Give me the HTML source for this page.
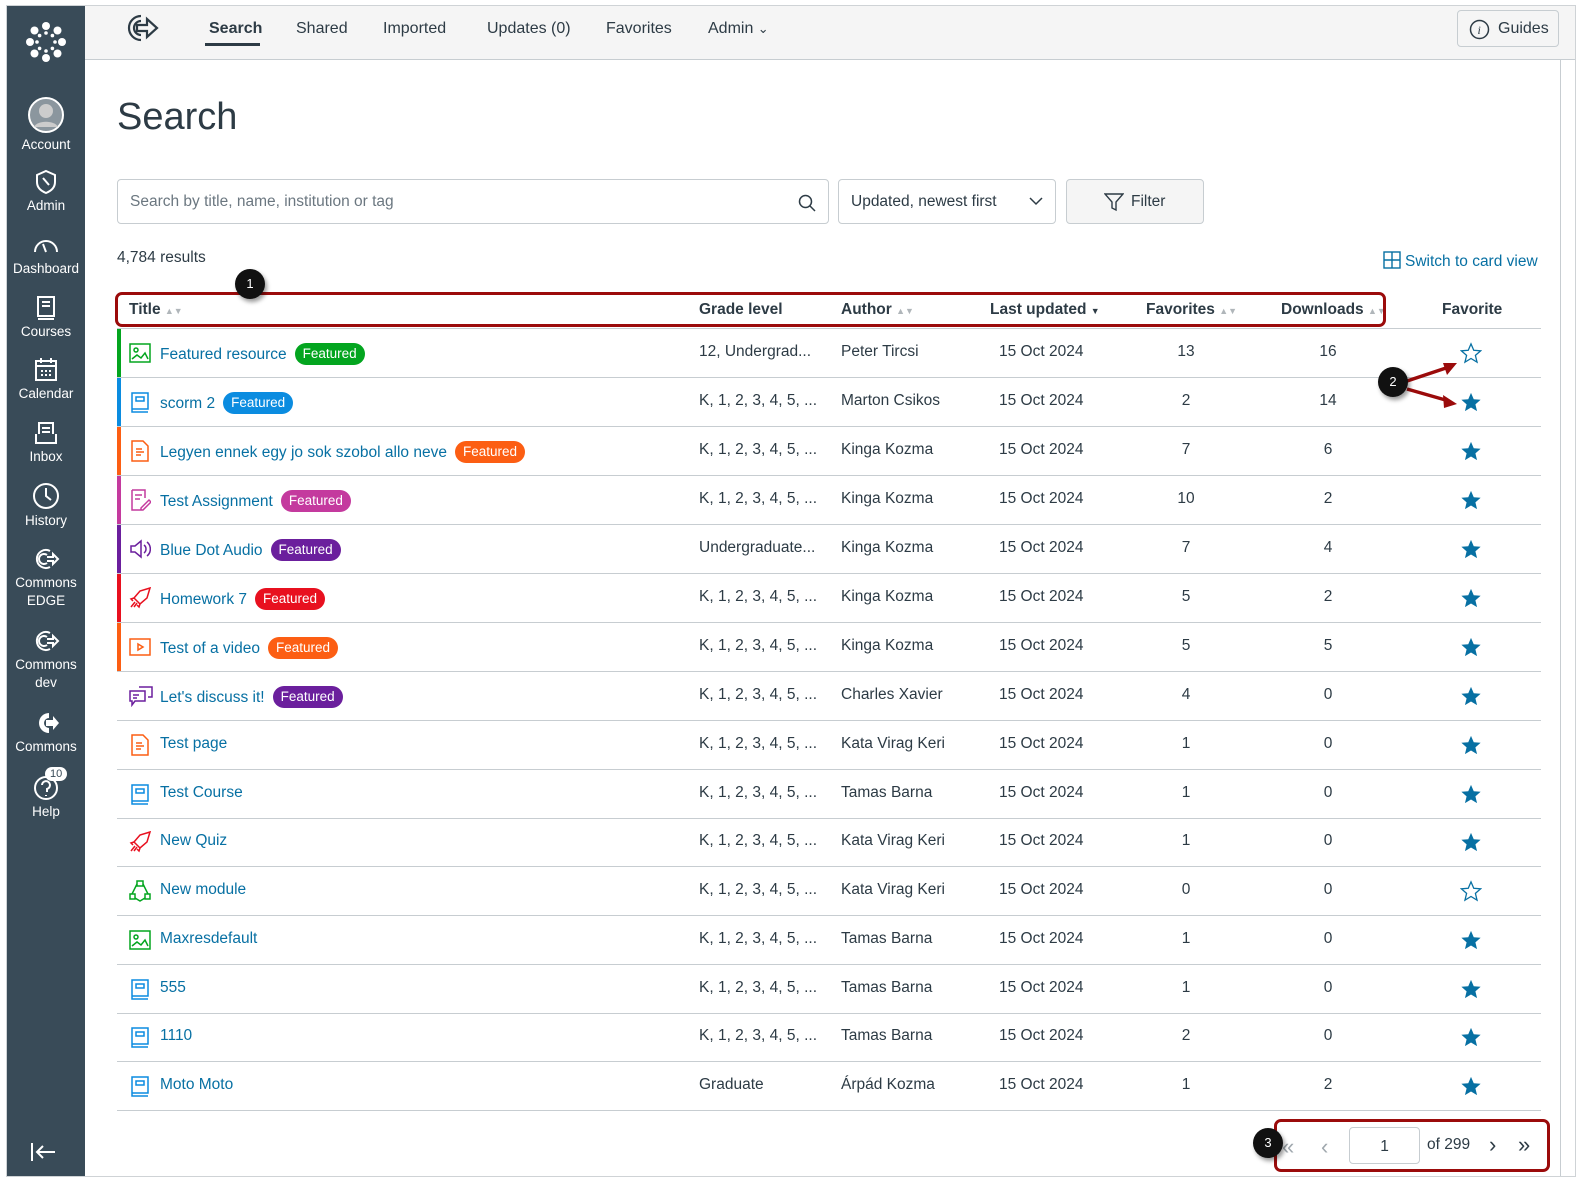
<!DOCTYPE html>
<html><head><meta charset="utf-8">
<style>
*{box-sizing:border-box;margin:0;padding:0}
body{width:1586px;height:1197px;background:#fff;font-family:"Liberation Sans",sans-serif;color:#2d3b45;position:relative;overflow:hidden}
.frame{position:absolute;left:6px;top:5px;width:1570px;height:1172px;border:1px solid #cfd3d6;background:#fff;overflow:hidden}
.side{position:absolute;left:0;top:0;width:78px;height:1170px;background:#394b58;color:#fff}
.si{position:absolute;left:0;width:78px;text-align:center;font-size:13.5px;line-height:18px}
.si svg{display:block;margin:0 auto 2px}
.top{position:absolute;left:78px;top:0;right:0;height:54px;background:#f5f5f5;border-bottom:1px solid #c7cdd1}
.nav{position:absolute;top:14px;font-size:16px;color:#2d3b45}
.a{position:absolute;white-space:nowrap}
.row{position:absolute;left:110px;width:1424px;height:49px;border-bottom:1px solid #c7cdd1;font-size:15.5px}
.row .bar{position:absolute;left:0;top:0;width:4px;height:48px}
.row .t{position:absolute;left:43px;top:14px;color:#0770a3;white-space:nowrap}
.row .ic{position:absolute;left:12px;top:13px}
.b{display:inline-block;color:#fff;font-size:13.5px;border-radius:12px;padding:2px 8px;margin-left:8px;vertical-align:1px;line-height:18px}
.row .g{position:absolute;left:582px;top:14px}
.row .au{position:absolute;left:724px;top:14px}
.row .d{position:absolute;left:882px;top:14px}
.row .f{position:absolute;left:1049px;width:40px;text-align:center;top:14px}
.row .dl{position:absolute;left:1191px;width:40px;text-align:center;top:14px}
.row .s{position:absolute;left:1343px;top:13px}
.h{position:absolute;top:295px;font-weight:bold;font-size:15.5px}
.ar{color:#b0b6ba;font-size:9px}
.circ{position:absolute;width:30px;height:30px;border-radius:50%;background:#111;color:#fff;font-size:13px;text-align:center;line-height:30px;box-shadow:2px 3px 4px rgba(0,0,0,.4)}
</style></head><body>
<div class="frame">
<div class="side">
 <div class="si" style="top:14px"><svg width="44" height="44" viewBox="0 0 44 44" fill="#fff"><circle cx="22" cy="6" r="4"/><circle cx="22" cy="38" r="4"/><circle cx="6" cy="22" r="4"/><circle cx="38" cy="22" r="4"/><circle cx="10.5" cy="10.5" r="4"/><circle cx="33.5" cy="10.5" r="4"/><circle cx="10.5" cy="33.5" r="4"/><circle cx="33.5" cy="33.5" r="4"/><circle cx="22" cy="13" r="1.8"/><circle cx="22" cy="31" r="1.8"/><circle cx="13" cy="22" r="1.8"/><circle cx="31" cy="22" r="1.8"/><circle cx="15.6" cy="15.6" r="1.8"/><circle cx="28.4" cy="15.6" r="1.8"/><circle cx="15.6" cy="28.4" r="1.8"/><circle cx="28.4" cy="28.4" r="1.8"/></svg></div>
 <div class="si" style="top:90px"><svg width="38" height="38" viewBox="0 0 38 38"><circle cx="19" cy="19" r="17" fill="#8b969e" stroke="#fff" stroke-width="2"/><circle cx="19" cy="15" r="7" fill="#ccc"/><path d="M7 31c3-7 21-7 24 0" fill="#ccc"/></svg>Account</div>
 <div class="si" style="top:163px"><svg width="26" height="26" viewBox="0 0 26 26" fill="none" stroke="#fff" stroke-width="2"><path d="M13 2l9 4v7c0 6-4 9-9 11-5-2-9-5-9-11V6z"/><path d="M10 9l6 7"/></svg>Admin</div>
 <div class="si" style="top:226px"><svg width="28" height="26" viewBox="0 0 28 26" fill="none" stroke="#fff" stroke-width="2"><path d="M3 20a11 11 0 1 1 22 0"/><path d="M14 20l-3-8"/></svg>Dashboard</div>
 <div class="si" style="top:289px"><svg width="24" height="26" viewBox="0 0 24 26" fill="none" stroke="#fff" stroke-width="2"><rect x="4" y="2" width="16" height="19"/><path d="M4 24h16M8 7h8M8 11h8"/></svg>Courses</div>
 <div class="si" style="top:351px"><svg width="26" height="26" viewBox="0 0 26 26" fill="none" stroke="#fff" stroke-width="2"><rect x="3" y="4" width="20" height="19"/><path d="M3 9h20M8 1v5M18 1v5M8 14h2M12 14h2M16 14h2M8 18h2M12 18h2M16 18h2"/></svg>Calendar</div>
 <div class="si" style="top:414px"><svg width="26" height="26" viewBox="0 0 26 26" fill="none" stroke="#fff" stroke-width="2"><path d="M3 14v9h20v-9M6 14V3h14v11M9 8h8M9 12h8"/></svg>Inbox</div>
 <div class="si" style="top:476px"><svg width="28" height="28" viewBox="0 0 28 28" fill="none" stroke="#fff" stroke-width="2"><circle cx="14" cy="14" r="12"/><path d="M14 6v8l5 4"/></svg>History</div>
 <div class="si" style="top:540px"><svg width="28" height="26" viewBox="0 0 28 26" fill="none" stroke="#fff" stroke-width="2"><path d="M18 5a9 9 0 1 0 0 16M15 9a5 5 0 1 0 0 8M15 11h6v-3l5 5-5 5v-3h-6"/></svg>Commons<br>EDGE</div>
 <div class="si" style="top:622px"><svg width="28" height="26" viewBox="0 0 28 26" fill="none" stroke="#fff" stroke-width="2"><path d="M18 5a9 9 0 1 0 0 16M15 9a5 5 0 1 0 0 8M15 11h6v-3l5 5-5 5v-3h-6"/></svg>Commons<br>dev</div>
 <div class="si" style="top:704px"><svg width="28" height="26" viewBox="0 0 28 26" fill="#fff"><path d="M17 3a10 10 0 1 0 0 20v-5a5 5 0 1 1 0-10zM14 10h7V6l6 7-6 7v-4h-7z"/></svg>Commons</div>
 <div class="si" style="top:767px"><svg width="28" height="28" viewBox="0 0 28 28" fill="none" stroke="#fff" stroke-width="2"><circle cx="14" cy="15" r="11"/><path d="M10 12a4 4 0 1 1 5 4v3M14 22v1"/></svg>Help</div>
 <div style="position:absolute;left:38px;top:761px;background:#fff;color:#394b58;font-size:11px;border-radius:10px;padding:1px 5px">10</div>
 <div style="position:absolute;left:22px;top:1135px"><svg width="28" height="22" viewBox="0 0 28 22" fill="none" stroke="#fff" stroke-width="2"><path d="M3 2v18M26 11H8M14 5l-6 6 6 6"/></svg></div>
</div>
<div class="top">
 <svg style="position:absolute;left:34px;top:6px" width="42" height="32" viewBox="0 0 42 32" fill="none" stroke="#2d3b45" stroke-width="2.2"><path d="M22 4A12 12 0 1 0 22 28M22 9a7 7 0 1 0 0 14M18 13h10V7l10 9-10 9v-6H18z"/></svg>
 <div class="nav" style="left:124px;font-weight:bold">Search</div>
 <div style="position:absolute;left:120px;top:37px;width:55px;height:3px;background:#2d3b45"></div>
 <div class="nav" style="left:211px">Shared</div>
 <div class="nav" style="left:298px">Imported</div>
 <div class="nav" style="left:402px">Updates (0)</div>
 <div class="nav" style="left:521px">Favorites</div>
 <div class="nav" style="left:623px">Admin <span style="font-size:13px">&#8964;</span></div>
 <div style="position:absolute;right:16px;top:4px;width:102px;height:37px;border:1px solid #c7cdd1;border-radius:4px;background:#f5f5f5;font-size:16px;padding:9px 0 0 40px">Guides<svg style="position:absolute;left:11px;top:8px" width="21" height="21" viewBox="0 0 21 21"><circle cx="10.5" cy="10.5" r="9" fill="none" stroke="#2d3b45" stroke-width="1.5"/><text x="8.5" y="15" font-size="12" font-style="italic" font-family="Liberation Serif" fill="#2d3b45">i</text></svg></div>
</div>
<div class="a" style="left:110px;top:90px;font-size:38px;color:#2d3b45">Search</div>
<div class="a" style="left:110px;top:173px;width:712px;height:45px;border:1px solid #c7cdd1;border-radius:4px;font-size:15.5px;color:#6b7780;padding:13px 12px">Search by title, name, institution or tag
<svg style="position:absolute;right:12px;top:14px" width="18" height="18" viewBox="0 0 18 18" fill="none" stroke="#2d3b45" stroke-width="1.5"><circle cx="7.5" cy="7.5" r="6"/><path d="M12 12l5 5"/></svg></div>
<div class="a" style="left:831px;top:173px;width:218px;height:45px;border:1px solid #c7cdd1;border-radius:4px;font-size:15.5px;padding:13px 12px">Updated, newest first<svg style="position:absolute;right:12px;top:16px" width="14" height="10" viewBox="0 0 14 10" fill="none" stroke="#2d3b45" stroke-width="1.5"><path d="M1 2l6 6 6-6"/></svg></div>
<div class="a" style="left:1059px;top:173px;width:138px;height:45px;border:1px solid #c7cdd1;border-radius:4px;background:#f5f5f5;font-size:15.5px;padding:13px 0 0 64px">Filter<svg style="position:absolute;left:37px;top:12px" width="20" height="20" viewBox="0 0 20 20" fill="none" stroke="#2d3b45" stroke-width="1.4"><path d="M1 2h18l-7 8v8l-4-2v-6z"/></svg></div>
<div class="a" style="left:110px;top:243px;font-size:15.5px">4,784 results</div>
<div class="a" style="left:1376px;top:245px;font-size:15.5px;color:#0770a3"><svg style="vertical-align:-3px;margin-right:4px" width="18" height="18" viewBox="0 0 18 18" fill="none" stroke="#0770a3" stroke-width="1.4"><rect x="1" y="1" width="16" height="16"/><path d="M9 1v16M1 9h16"/></svg>Switch to card view</div>

<div class="h" style="left:122px">Title <span class="ar">&#9650;&#9660;</span></div>
<div class="h" style="left:692px">Grade level</div>
<div class="h" style="left:834px">Author <span class="ar">&#9650;&#9660;</span></div>
<div class="h" style="left:983px">Last updated <span style="font-size:9px">&#9660;</span></div>
<div class="h" style="left:1139px">Favorites <span class="ar">&#9650;&#9660;</span></div>
<div class="h" style="left:1274px">Downloads <span class="ar">&#9650;&#9660;</span></div>
<div class="h" style="left:1435px">Favorite</div>
<div class="a" style="left:110px;top:322px;width:1424px;height:1px;background:#c7cdd1"></div>
<div class="a" style="left:108px;top:286px;width:1271px;height:35px;border:3px solid #9b0b0b;border-radius:7px"></div>
<div class="circ" style="left:228px;top:263px">1</div>

<!-- rows -->
<div class="row" style="top:323px"><div class="bar" style="background:#03a51f"></div><svg class="ic" width="22" height="22" viewBox="0 0 22 22" fill="none" stroke="#03a51f" stroke-width="1.5"><rect x="1" y="2" width="20" height="18"/><circle cx="7" cy="8" r="2"/><path d="M3 17l5-4 4 3 4-5 3 6"/></svg><div class="t">Featured resource<span class="b" style="background:#03a51f">Featured</span></div><div class="g">12, Undergrad...</div><div class="au">Peter Tircsi</div><div class="d">15 Oct 2024</div><div class="f">13</div><div class="dl">16</div><svg class="s" width="22" height="22" viewBox="0 0 24 24"><path d="M12 2l3 7 7.5.6-5.7 5 1.8 7.4L12 18l-6.6 4 1.8-7.4-5.7-5L9 9z" fill="none" stroke="#0770a3" stroke-width="1.4"/></svg></div>
<div class="row" style="top:372px"><div class="bar" style="background:#0b8ce0"></div><svg class="ic" width="22" height="22" viewBox="0 0 22 22" fill="none" stroke="#0b8ce0" stroke-width="1.5"><path d="M3 2h16v16H3zM3 18v3h16M7 6h8v4H7z"/></svg><div class="t">scorm 2<span class="b" style="background:#0b8ce0">Featured</span></div><div class="g">K, 1, 2, 3, 4, 5, ...</div><div class="au">Marton Csikos</div><div class="d">15 Oct 2024</div><div class="f">2</div><div class="dl">14</div><svg class="s" width="22" height="22" viewBox="0 0 24 24"><path d="M12 2l3 7 7.5.6-5.7 5 1.8 7.4L12 18l-6.6 4 1.8-7.4-5.7-5L9 9z" fill="#0770a3"/></svg></div>
<div class="row" style="top:421px"><div class="bar" style="background:#fc5e13"></div><svg class="ic" width="22" height="22" viewBox="0 0 22 22" fill="none" stroke="#fc5e13" stroke-width="1.5"><path d="M3 1h11l5 5v15H3zM7 9h6M7 12h8M7 15h5"/></svg><div class="t">Legyen ennek egy jo sok szobol allo neve<span class="b" style="background:#fc5e13">Featured</span></div><div class="g">K, 1, 2, 3, 4, 5, ...</div><div class="au">Kinga Kozma</div><div class="d">15 Oct 2024</div><div class="f">7</div><div class="dl">6</div><svg class="s" width="22" height="22" viewBox="0 0 24 24"><path d="M12 2l3 7 7.5.6-5.7 5 1.8 7.4L12 18l-6.6 4 1.8-7.4-5.7-5L9 9z" fill="#0770a3"/></svg></div>
<div class="row" style="top:470px"><div class="bar" style="background:#c43a9e"></div><svg class="ic" width="22" height="22" viewBox="0 0 22 22" fill="none" stroke="#c43a9e" stroke-width="1.5"><path d="M3 1h13v8M3 1v20h10M6 6h7M6 10h5M12 19l8-8 2 2-8 8h-2z"/></svg><div class="t">Test Assignment<span class="b" style="background:#c43a9e">Featured</span></div><div class="g">K, 1, 2, 3, 4, 5, ...</div><div class="au">Kinga Kozma</div><div class="d">15 Oct 2024</div><div class="f">10</div><div class="dl">2</div><svg class="s" width="22" height="22" viewBox="0 0 24 24"><path d="M12 2l3 7 7.5.6-5.7 5 1.8 7.4L12 18l-6.6 4 1.8-7.4-5.7-5L9 9z" fill="#0770a3"/></svg></div>
<div class="row" style="top:519px"><div class="bar" style="background:#6b1f9d"></div><svg class="ic" width="22" height="22" viewBox="0 0 22 22" fill="none" stroke="#6b1f9d" stroke-width="1.5"><path d="M2 8h4l6-5v16l-6-5H2zM15 7a5 5 0 0 1 0 8M18 4a9 9 0 0 1 0 14"/></svg><div class="t">Blue Dot Audio<span class="b" style="background:#6b1f9d">Featured</span></div><div class="g">Undergraduate...</div><div class="au">Kinga Kozma</div><div class="d">15 Oct 2024</div><div class="f">7</div><div class="dl">4</div><svg class="s" width="22" height="22" viewBox="0 0 24 24"><path d="M12 2l3 7 7.5.6-5.7 5 1.8 7.4L12 18l-6.6 4 1.8-7.4-5.7-5L9 9z" fill="#0770a3"/></svg></div>
<div class="row" style="top:568px"><div class="bar" style="background:#e8101f"></div><svg class="ic" width="22" height="22" viewBox="0 0 22 22" fill="none" stroke="#e8101f" stroke-width="1.5"><path d="M21 1l-10 3-6 7 6 6 7-6zM5 11l-3 1 2 2M11 17l-1 3-2-2M6 15l-4 5M8 16l-3 4"/></svg><div class="t">Homework 7<span class="b" style="background:#e8101f">Featured</span></div><div class="g">K, 1, 2, 3, 4, 5, ...</div><div class="au">Kinga Kozma</div><div class="d">15 Oct 2024</div><div class="f">5</div><div class="dl">2</div><svg class="s" width="22" height="22" viewBox="0 0 24 24"><path d="M12 2l3 7 7.5.6-5.7 5 1.8 7.4L12 18l-6.6 4 1.8-7.4-5.7-5L9 9z" fill="#0770a3"/></svg></div>
<div class="row" style="top:617px"><div class="bar" style="background:#fc5e13"></div><svg class="ic" width="22" height="22" viewBox="0 0 22 22" fill="none" stroke="#fc5e13" stroke-width="1.5"><rect x="1" y="3" width="20" height="16"/><path d="M9 8l5 3-5 3z"/></svg><div class="t">Test of a video<span class="b" style="background:#fc5e13">Featured</span></div><div class="g">K, 1, 2, 3, 4, 5, ...</div><div class="au">Kinga Kozma</div><div class="d">15 Oct 2024</div><div class="f">5</div><div class="dl">5</div><svg class="s" width="22" height="22" viewBox="0 0 24 24"><path d="M12 2l3 7 7.5.6-5.7 5 1.8 7.4L12 18l-6.6 4 1.8-7.4-5.7-5L9 9z" fill="#0770a3"/></svg></div>
<div class="row" style="top:666px"><svg class="ic" width="24" height="22" viewBox="0 0 24 22" fill="none" stroke="#6b1f9d" stroke-width="1.5"><path d="M1 6h15v10H6l-3 4v-4H1zM10 2h13v10h-4M4 10h6M4 13h4"/></svg><div class="t">Let's discuss it!<span class="b" style="background:#6b1f9d">Featured</span></div><div class="g">K, 1, 2, 3, 4, 5, ...</div><div class="au">Charles Xavier</div><div class="d">15 Oct 2024</div><div class="f">4</div><div class="dl">0</div><svg class="s" width="22" height="22" viewBox="0 0 24 24"><path d="M12 2l3 7 7.5.6-5.7 5 1.8 7.4L12 18l-6.6 4 1.8-7.4-5.7-5L9 9z" fill="#0770a3"/></svg></div>
<div class="row" style="top:715px"><svg class="ic" width="22" height="22" viewBox="0 0 22 22" fill="none" stroke="#fc5e13" stroke-width="1.5"><path d="M3 1h11l5 5v15H3zM7 9h6M7 12h8M7 15h5"/></svg><div class="t">Test page</div><div class="g">K, 1, 2, 3, 4, 5, ...</div><div class="au">Kata Virag Keri</div><div class="d">15 Oct 2024</div><div class="f">1</div><div class="dl">0</div><svg class="s" width="22" height="22" viewBox="0 0 24 24"><path d="M12 2l3 7 7.5.6-5.7 5 1.8 7.4L12 18l-6.6 4 1.8-7.4-5.7-5L9 9z" fill="#0770a3"/></svg></div>
<div class="row" style="top:764px"><svg class="ic" width="22" height="22" viewBox="0 0 22 22" fill="none" stroke="#0b8ce0" stroke-width="1.5"><path d="M3 2h16v16H3zM3 18v3h16M7 6h8v4H7z"/></svg><div class="t">Test Course</div><div class="g">K, 1, 2, 3, 4, 5, ...</div><div class="au">Tamas Barna</div><div class="d">15 Oct 2024</div><div class="f">1</div><div class="dl">0</div><svg class="s" width="22" height="22" viewBox="0 0 24 24"><path d="M12 2l3 7 7.5.6-5.7 5 1.8 7.4L12 18l-6.6 4 1.8-7.4-5.7-5L9 9z" fill="#0770a3"/></svg></div>
<div class="row" style="top:812px"><svg class="ic" width="22" height="22" viewBox="0 0 22 22" fill="none" stroke="#e8101f" stroke-width="1.5"><path d="M21 1l-10 3-6 7 6 6 7-6zM5 11l-3 1 2 2M11 17l-1 3-2-2M6 15l-4 5M8 16l-3 4"/></svg><div class="t">New Quiz</div><div class="g">K, 1, 2, 3, 4, 5, ...</div><div class="au">Kata Virag Keri</div><div class="d">15 Oct 2024</div><div class="f">1</div><div class="dl">0</div><svg class="s" width="22" height="22" viewBox="0 0 24 24"><path d="M12 2l3 7 7.5.6-5.7 5 1.8 7.4L12 18l-6.6 4 1.8-7.4-5.7-5L9 9z" fill="#0770a3"/></svg></div>
<div class="row" style="top:861px"><svg class="ic" width="22" height="22" viewBox="0 0 22 22" fill="none" stroke="#03a51f" stroke-width="1.5"><rect x="8" y="1" width="6" height="5"/><rect x="1" y="14" width="5" height="5"/><rect x="16" y="14" width="5" height="5"/><path d="M8 4L3 14M14 4l5 10M6 18l5 3 5-3"/></svg><div class="t">New module</div><div class="g">K, 1, 2, 3, 4, 5, ...</div><div class="au">Kata Virag Keri</div><div class="d">15 Oct 2024</div><div class="f">0</div><div class="dl">0</div><svg class="s" width="22" height="22" viewBox="0 0 24 24"><path d="M12 2l3 7 7.5.6-5.7 5 1.8 7.4L12 18l-6.6 4 1.8-7.4-5.7-5L9 9z" fill="none" stroke="#0770a3" stroke-width="1.4"/></svg></div>
<div class="row" style="top:910px"><svg class="ic" width="22" height="22" viewBox="0 0 22 22" fill="none" stroke="#03a51f" stroke-width="1.5"><rect x="1" y="2" width="20" height="18"/><circle cx="7" cy="8" r="2"/><path d="M3 17l5-4 4 3 4-5 3 6"/></svg><div class="t">Maxresdefault</div><div class="g">K, 1, 2, 3, 4, 5, ...</div><div class="au">Tamas Barna</div><div class="d">15 Oct 2024</div><div class="f">1</div><div class="dl">0</div><svg class="s" width="22" height="22" viewBox="0 0 24 24"><path d="M12 2l3 7 7.5.6-5.7 5 1.8 7.4L12 18l-6.6 4 1.8-7.4-5.7-5L9 9z" fill="#0770a3"/></svg></div>
<div class="row" style="top:959px"><svg class="ic" width="22" height="22" viewBox="0 0 22 22" fill="none" stroke="#0b8ce0" stroke-width="1.5"><path d="M3 2h16v16H3zM3 18v3h16M7 6h8v4H7z"/></svg><div class="t">555</div><div class="g">K, 1, 2, 3, 4, 5, ...</div><div class="au">Tamas Barna</div><div class="d">15 Oct 2024</div><div class="f">1</div><div class="dl">0</div><svg class="s" width="22" height="22" viewBox="0 0 24 24"><path d="M12 2l3 7 7.5.6-5.7 5 1.8 7.4L12 18l-6.6 4 1.8-7.4-5.7-5L9 9z" fill="#0770a3"/></svg></div>
<div class="row" style="top:1007px"><svg class="ic" width="22" height="22" viewBox="0 0 22 22" fill="none" stroke="#0b8ce0" stroke-width="1.5"><path d="M3 2h16v16H3zM3 18v3h16M7 6h8v4H7z"/></svg><div class="t">1110</div><div class="g">K, 1, 2, 3, 4, 5, ...</div><div class="au">Tamas Barna</div><div class="d">15 Oct 2024</div><div class="f">2</div><div class="dl">0</div><svg class="s" width="22" height="22" viewBox="0 0 24 24"><path d="M12 2l3 7 7.5.6-5.7 5 1.8 7.4L12 18l-6.6 4 1.8-7.4-5.7-5L9 9z" fill="#0770a3"/></svg></div>
<div class="row" style="top:1056px"><svg class="ic" width="22" height="22" viewBox="0 0 22 22" fill="none" stroke="#0b8ce0" stroke-width="1.5"><path d="M3 2h16v16H3zM3 18v3h16M7 6h8v4H7z"/></svg><div class="t">Moto Moto</div><div class="g">Graduate</div><div class="au">Árpád Kozma</div><div class="d">15 Oct 2024</div><div class="f">1</div><div class="dl">2</div><svg class="s" width="22" height="22" viewBox="0 0 24 24"><path d="M12 2l3 7 7.5.6-5.7 5 1.8 7.4L12 18l-6.6 4 1.8-7.4-5.7-5L9 9z" fill="#0770a3"/></svg></div>

<!-- annotation 2 -->
<svg class="a" style="left:1390px;top:345px" width="70" height="60" viewBox="0 0 70 60"><path d="M10 30L52 16M10 38L52 50" stroke="#9b0b0b" stroke-width="3.5"/><path d="M60 12L46 12 50 24z M60 53L46 44 47 57z" fill="#9b0b0b"/></svg>
<div class="circ" style="left:1371px;top:361px">2</div>

<!-- pagination -->
<div class="a" style="left:1267px;top:1113px;width:276px;height:53px;border:3px solid #9b0b0b;border-radius:7px"></div>
<div class="a" style="left:1275px;top:1128px;font-size:22px;color:#a0a8ae">&laquo;</div>
<div class="a" style="left:1314px;top:1128px;font-size:22px;color:#a0a8ae">&lsaquo;</div>
<div class="a" style="left:1342px;top:1121px;width:71px;height:37px;border:1px solid #c7cdd1;border-radius:4px;text-align:center;font-size:15.5px;padding-top:10px">1</div>
<div class="a" style="left:1420px;top:1130px;font-size:15.5px">of 299</div>
<div class="a" style="left:1482px;top:1126px;font-size:22px">&rsaquo;</div>
<div class="a" style="left:1511px;top:1126px;font-size:22px">&raquo;</div>
<div class="circ" style="left:1246px;top:1122px">3</div>
<div class="a" style="left:1553px;top:54px;width:1px;height:1116px;background:#c7cdd1"></div>
</div>
</body></html>
